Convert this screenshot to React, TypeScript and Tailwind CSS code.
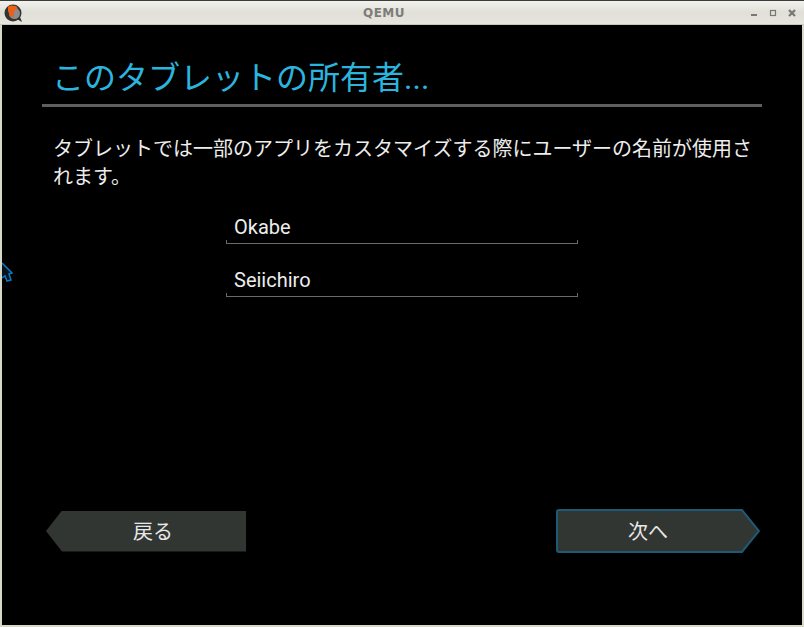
import React from 'react';

const font = { fontFamily: '"Roboto", "Noto Sans CJK JP", sans-serif' };

const QemuLogo = () => (
  <svg width="20" height="20" viewBox="0 0 20 20" className="shrink-0">
    <circle cx="10" cy="10" r="8.5" fill="#333" />
    <circle cx="11.5" cy="10.5" r="5.5" fill="#8c8c8c" />
    <path d="M5 3.5 L8 2.5 L13 3 L15 5.5 L11.5 7 L10 15 L7 12.5 L5 8 Z" fill="#ee5f14" />
    <path d="M14 16 L19 19 L17 14 Z" fill="#2b2b2b" />
  </svg>
);

const TitleBar = () => (
  <div className="relative flex h-[24px] shrink-0 items-center justify-between bg-gradient-to-b from-[#f2f2ee] via-[#e0e0d8] to-[#e6e6de] border-b border-[#c8c8b8] pl-[3px] pr-[8px]">
    <QemuLogo />
    <span className="absolute left-0 w-[768px] text-center text-[12px] font-bold tracking-[0.5px] text-[#7d7d78]" style={{ fontFamily: '"DejaVu Sans", sans-serif' }}>
      QEMU
    </span>
    <div className="flex items-center">
      <svg width="10" height="10" viewBox="0 0 10 10" className="mr-[9px]">
        <rect x="1" y="6" width="6" height="2" fill="#777" />
      </svg>
      <svg width="8" height="8" viewBox="0 0 8 8" className="mr-[11px]">
        <rect x="1.5" y="1.5" width="5" height="5" fill="none" stroke="#777" strokeWidth="1.2" />
      </svg>
      <svg width="8" height="8" viewBox="0 0 8 8">
        <path d="M1 1 L7 7 M7 1 L1 7" stroke="#777" strokeWidth="2.2" />
      </svg>
    </div>
  </div>
);

const BackButton = () => (
  <button className="relative flex h-[41px] w-[200px] items-center justify-center pl-[14px] pt-[2px] text-[20px] text-[#e8e8e8] [clip-path:polygon(16px_0,100%_0,100%_100%,16px_100%,0_50%)] bg-[#323633]">
    戻る
  </button>
);

const NextButton = () => (
  <button className="relative flex h-[44px] w-[204px] items-center justify-center pr-[20px] pt-[2px] text-[20px] text-[#e8e8e8]">
    <svg width="204" height="44" viewBox="0 0 204 44" className="absolute inset-0">
      <path d="M3 1 H186 L203 22 L186 43 H3 Q1 43 1 41 V3 Q1 1 3 1 Z" fill="#323633" stroke="#1d5a75" strokeWidth="2" />
    </svg>
    <span className="relative">次へ</span>
  </button>
);

const Field = ({ value }: { value: string }) => (
  <div className="relative h-[38px] w-[352px] border-b border-[#6a6a6a] pl-[8px] text-[20px] leading-[42px] text-[#ededed]">
    <span className="absolute bottom-0 left-0 h-[3px] w-px bg-[#6a6a6a]" />
    <span className="absolute bottom-0 right-0 h-[3px] w-px bg-[#6a6a6a]" />
    {value}
  </div>
);

export default function App() {
  return (
    <div className="flex h-[627px] w-[804px] flex-col overflow-hidden bg-black" style={font}>
      <div className="h-[1px] shrink-0 bg-[#3c3c3c]" />
      <TitleBar />
      <div className="relative flex min-h-0 flex-1 flex-col border-x-2 border-b-2 border-[#d8d8c8] bg-black">
        <div className="mx-[40px] mt-[29px] h-[53px] border-b-[3px] border-[#5e5e60] pl-[10px] text-[32px] leading-[49px] text-[#2bb4de]">
          このタブレットの所有者...
        </div>
        <p className="ml-[51px] mr-[39px] mt-[28px] text-[20px] leading-[28px] text-[#ededed]">
          タブレットでは一部のアプリをカスタマイズする際にユーザーの名前が使用されます。
        </p>
        <div className="ml-[224px] mt-[15px] flex flex-col gap-[15px]">
          <Field value="Okabe" />
          <Field value="Seiichiro" />
        </div>
        <div className="ml-[44px] mr-[42px] mt-[212px] flex items-center justify-between">
          <BackButton />
          <NextButton />
        </div>
        <svg width="14" height="22" viewBox="0 0 14 22" className="absolute left-0 top-[236px]">
          <path d="M0 2 L10 12 L7 13 L9 19 L5 20 L3 15 L0 17" fill="#04141f" stroke="#0f78c0" strokeWidth="1.5" />
        </svg>
      </div>
    </div>
  );
}
